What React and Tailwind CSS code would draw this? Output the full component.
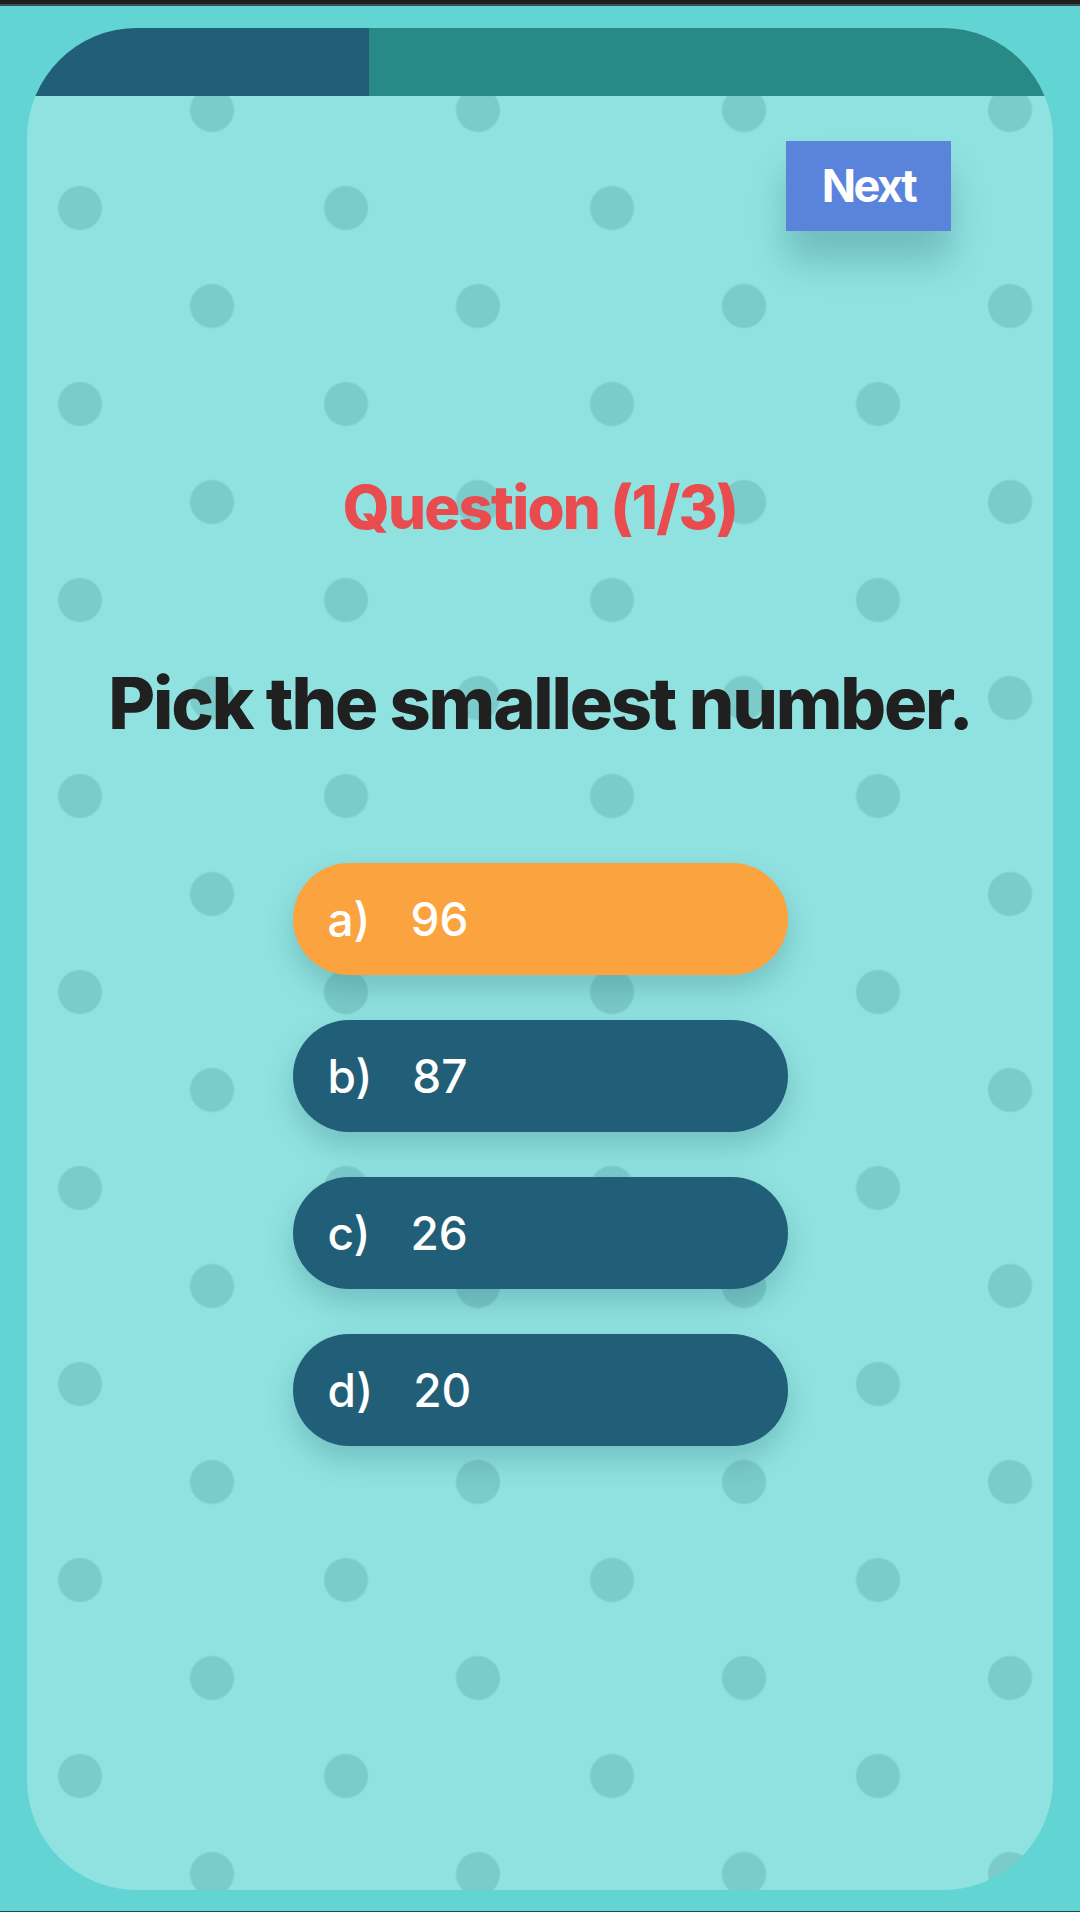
import React, { useState } from "react";

const options = [
  { label: "a)", value: "96" },
  { label: "b)", value: "87" },
  { label: "c)", value: "26" },
  { label: "d)", value: "20" },
];

const App = () => {
  const [selected, setSelected] = useState(0);
  const current = 1;
  const total = 3;

  return (
    <div className="min-h-[1912px] w-[1080px] bg-[#62d4d4] font-['Inter',sans-serif] flex flex-col">
      {/* top edge */}
      <div className="h-[4px] bg-[#202020]" />
      <div className="h-[2px] bg-[#3b5050]" />

      <div className="flex-1 px-[27px] pt-[22px] pb-[21px]">
        <div className="h-[1862px] rounded-[110px] overflow-hidden bg-[#90e2e1] [background-image:radial-gradient(circle,#7bcbcb_21px,transparent_23px),radial-gradient(circle,#7bcbcb_21px,transparent_23px)] [background-size:266px_196px] [background-position:52px_-16px,-80px_82px] flex flex-col">
          {/* progress */}
          <div className="h-[68px] flex shrink-0">
            <div className="w-1/3 bg-[#215e77]" />
            <div className="flex-1 bg-[#288987]" />
          </div>

          <div className="flex justify-end pr-[102px] mt-[45px]">
            <button className="w-[165px] h-[90px] bg-[#5a83dc] text-white text-[45px] font-bold tracking-[-2.5px] shadow-[0_30px_36px_rgba(0,60,70,0.22)]">
              Next
            </button>
          </div>

          <h2 className="mt-[246px] text-center text-[#e84c4f] text-[60px] leading-[60px] font-extrabold tracking-[-1.8px]">
            Question ({current}/{total})
          </h2>

          <h1 className="mt-[130px] text-center text-[#202020] text-[72px] leading-[72px] font-extrabold tracking-[-2.2px]">
            Pick the smallest number.
          </h1>

          <div className="mt-[124px] flex flex-col items-center gap-[45px]">
            {options.map((opt, i) => (
              <button
                key={opt.label}
                onClick={() => setSelected(i)}
                className={`w-[495px] h-[112px] rounded-full flex items-center pl-[35px] gap-[40px] text-white text-[46px] font-medium shadow-[0_14px_30px_rgba(0,60,70,0.2)] ${
                  selected === i ? "bg-[#fba33e]" : "bg-[#215e78]"
                }`}
              >
                <span>{opt.label}</span>
                <span>{opt.value}</span>
              </button>
            ))}
          </div>
        </div>
      </div>

      <div className="h-[1px] bg-[#1e4a4a]" />
    </div>
  );
};

export default App;
